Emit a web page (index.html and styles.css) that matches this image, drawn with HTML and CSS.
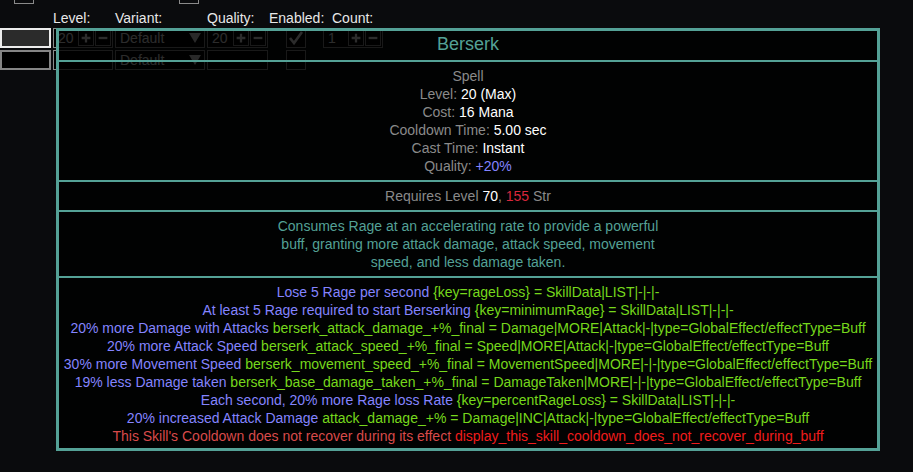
FILE: index.html
```html
<!DOCTYPE html>
<html>
<head>
<meta charset="utf-8">
<link rel="stylesheet" href="styles.css">
</head>
<body>
<div class="app">
  <div class="topstrip">
    <div class="tbox tbox-a"></div>
    <div class="tbox tbox-b"></div>
  </div>
  <div class="labels">
    <span class="lab lab-level">Level:</span>
    <span class="lab lab-variant">Variant:</span>
    <span class="lab lab-quality">Quality:</span>
    <span class="lab lab-enabled">Enabled:</span>
    <span class="lab lab-count">Count:</span>
  </div>
  <div class="row">
    <div class="gem gem-sel"></div>
    <div class="edit ed-level"><span class="val">20</span><span class="btns"><span class="btn"><svg viewBox="0 0 16 16"><path d="M8 3v10M3 8h10"/></svg></span><span class="btn"><svg viewBox="0 0 16 16"><path d="M3 8h10"/></svg></span></span></div>
    <div class="drop"><span class="val">Default</span><svg class="arrow" viewBox="0 0 12 10"><polygon points="0,0 12,0 6,10"/></svg></div>
    <div class="edit ed-quality"><span class="val">20</span><span class="btns"><span class="btn"><svg viewBox="0 0 16 16"><path d="M8 3v10M3 8h10"/></svg></span><span class="btn"><svg viewBox="0 0 16 16"><path d="M3 8h10"/></svg></span></span></div>
    <div class="check"><svg viewBox="0 0 18 18"><polyline points="3,9 7,14 15,3"/></svg></div>
    <div class="edit ed-count"><span class="val">1</span><span class="btns"><span class="btn"><svg viewBox="0 0 16 16"><path d="M8 3v10M3 8h10"/></svg></span><span class="btn"><svg viewBox="0 0 16 16"><path d="M3 8h10"/></svg></span></span></div>
  </div>
  <div class="row">
    <div class="gem"></div>
    <div class="edit ed-level"></div>
    <div class="drop"><span class="val">Default</span><svg class="arrow" viewBox="0 0 12 10"><polygon points="0,0 12,0 6,10"/></svg></div>
    <div class="edit ed-quality"></div>
    <div class="check"></div>
  </div>

  <div class="tooltip">
    <div class="sec title">Berserk</div>
    <div class="sec">
      <div class="ln gray">Spell</div>
      <div class="ln"><span class="gray">Level: </span><span class="white">20 (Max)</span></div>
      <div class="ln"><span class="gray">Cost: </span><span class="white">16 Mana</span></div>
      <div class="ln"><span class="gray">Cooldown Time: </span><span class="white">5.00 sec</span></div>
      <div class="ln"><span class="gray">Cast Time: </span><span class="white">Instant</span></div>
      <div class="ln"><span class="gray">Quality: </span><span class="blue">+20%</span></div>
    </div>
    <div class="sec">
      <div class="ln"><span class="gray">Requires Level </span><span class="white">70</span><span class="gray">, </span><span class="red">155</span><span class="gray"> Str</span></div>
    </div>
    <div class="sec desc">
      <div class="ln">Consumes Rage at an accelerating rate to provide a powerful</div>
      <div class="ln">buff, granting more attack damage, attack speed, movement</div>
      <div class="ln">speed, and less damage taken.</div>
    </div>
    <div class="sec stats">
      <div class="ln"><span class="blue">Lose 5 Rage per second </span><span class="green">{key=rageLoss} = SkillData|LIST|-|-|-</span></div>
      <div class="ln"><span class="blue">At least 5 Rage required to start Berserking </span><span class="green">{key=minimumRage} = SkillData|LIST|-|-|-</span></div>
      <div class="ln"><span class="blue">20% more Damage with Attacks </span><span class="green">berserk_attack_damage_+%_final = Damage|MORE|Attack|-|type=GlobalEffect/effectType=Buff</span></div>
      <div class="ln"><span class="blue">20% more Attack Speed </span><span class="green">berserk_attack_speed_+%_final = Speed|MORE|Attack|-|type=GlobalEffect/effectType=Buff</span></div>
      <div class="ln"><span class="blue">30% more Movement Speed </span><span class="green">berserk_movement_speed_+%_final = MovementSpeed|MORE|-|-|type=GlobalEffect/effectType=Buff</span></div>
      <div class="ln"><span class="blue">19% less Damage taken </span><span class="green">berserk_base_damage_taken_+%_final = DamageTaken|MORE|-|-|type=GlobalEffect/effectType=Buff</span></div>
      <div class="ln"><span class="blue">Each second, 20% more Rage loss Rate </span><span class="green">{key=percentRageLoss} = SkillData|LIST|-|-|-</span></div>
      <div class="ln"><span class="blue">20% increased Attack Damage </span><span class="green">attack_damage_+% = Damage|INC|Attack|-|type=GlobalEffect/effectType=Buff</span></div>
      <div class="ln"><span class="lred">This Skill's Cooldown does not recover during its effect </span><span class="red2">display_this_skill_cooldown_does_not_recover_during_buff</span></div>
    </div>
  </div>
</div>
</body>
</html>
```
FILE: styles.css
```css
html, body {
  margin: 0;
  padding: 0;
  background: #0a0b0d;
  overflow: hidden;
}
body {
  width: 913px;
  height: 472px;
  font-family: "Liberation Sans", Arial, sans-serif;
  font-size: 14px;
  color: #e6e6e6;
}
.app {
  position: relative;
  width: 913px;
  height: 472px;
  overflow: hidden;
}
.topstrip {
  height: 8px;
  display: flex;
  align-items: flex-end;
  overflow: visible;
}
.tbox {
  box-sizing: border-box;
  height: 20px;
  margin-top: -16px;
  border: 1px solid #8a8a8a;
  align-self: flex-start;
}
.tbox-a { margin-left: 14px; width: 20px; }
.tbox-b { margin-left: 145px; width: 20px; }

.labels {
  height: 20px;
  line-height: 20px;
  display: flex;
  padding-left: 53px;
  color: #e8e8e8;
}
.lab { display: block; }
.lab-level { width: 62px; }
.lab-variant { width: 92px; }
.lab-quality { width: 62px; }
.lab-enabled { width: 63px; }

.row {
  display: flex;
  height: 20px;
  margin-bottom: 2px;
}
.gem {
  box-sizing: border-box;
  width: 51px;
  height: 20px;
  border: 2px solid #858585;
  background: #000;
}
.gem-sel {
  border-color: #ececec;
  background: #2b2b2b;
}
.edit, .drop, .check {
  box-sizing: border-box;
  height: 20px;
  border: 1px solid #8c8c8c;
  display: flex;
  align-items: center;
  color: #f0f0f0;
  background: #000;
}
.val { padding-left: 4px; flex: 1; line-height: 18px; }
.ed-level { margin-left: 2px; width: 60px; }
.drop { margin-left: 2px; width: 90px; }
.ed-quality { margin-left: 2px; width: 61px; }
.check { margin-left: 18px; width: 20px; justify-content: center; }
.ed-count { margin-left: 17px; width: 60px; }
.btns { display: flex; gap: 1px; padding-right: 1px; }
.btn {
  box-sizing: border-box;
  width: 16px;
  height: 16px;
  border: 1px solid #8c8c8c;
  display: flex;
  align-items: center;
  justify-content: center;
}
.btn svg { width: 14px; height: 14px; }
.btn path { stroke: #f0f0f0; stroke-width: 2.6; fill: none; }
.arrow { width: 12px; height: 10px; margin-right: 3px; }
.arrow polygon { fill: #e0e0e0; }
.check svg { width: 18px; height: 18px; }
.check polyline { fill: none; stroke: #f0f0f0; stroke-width: 2.6; }

.tooltip {
  position: absolute;
  left: 56px;
  top: 28px;
  width: 824px;
  height: 423px;
  box-sizing: border-box;
  border: 3px solid #54a196;
  background: rgba(0, 0, 0, 0.82);
  text-align: center;
  display: flex;
  flex-direction: column;
}
.sec {
  padding: 5px 0;
  border-top: 2px solid #54a196;
}
.sec.title {
  border-top: none;
  padding: 0;
  height: 29px;
  line-height: 27px;
  font-size: 18px;
  color: #54a196;
}
.stats { flex: 1; padding-bottom: 0; }
.ln { line-height: 18px; white-space: nowrap; }
.gray { color: #8a8a8a; }
.white { color: #ffffff; }
.blue { color: #8484ff; }
.red { color: #d8283c; }
.desc { color: #54a196; }
.green { color: #76d81c; }
.lred { color: #d84a4a; }
.red2 { color: #f01c1c; }
```
